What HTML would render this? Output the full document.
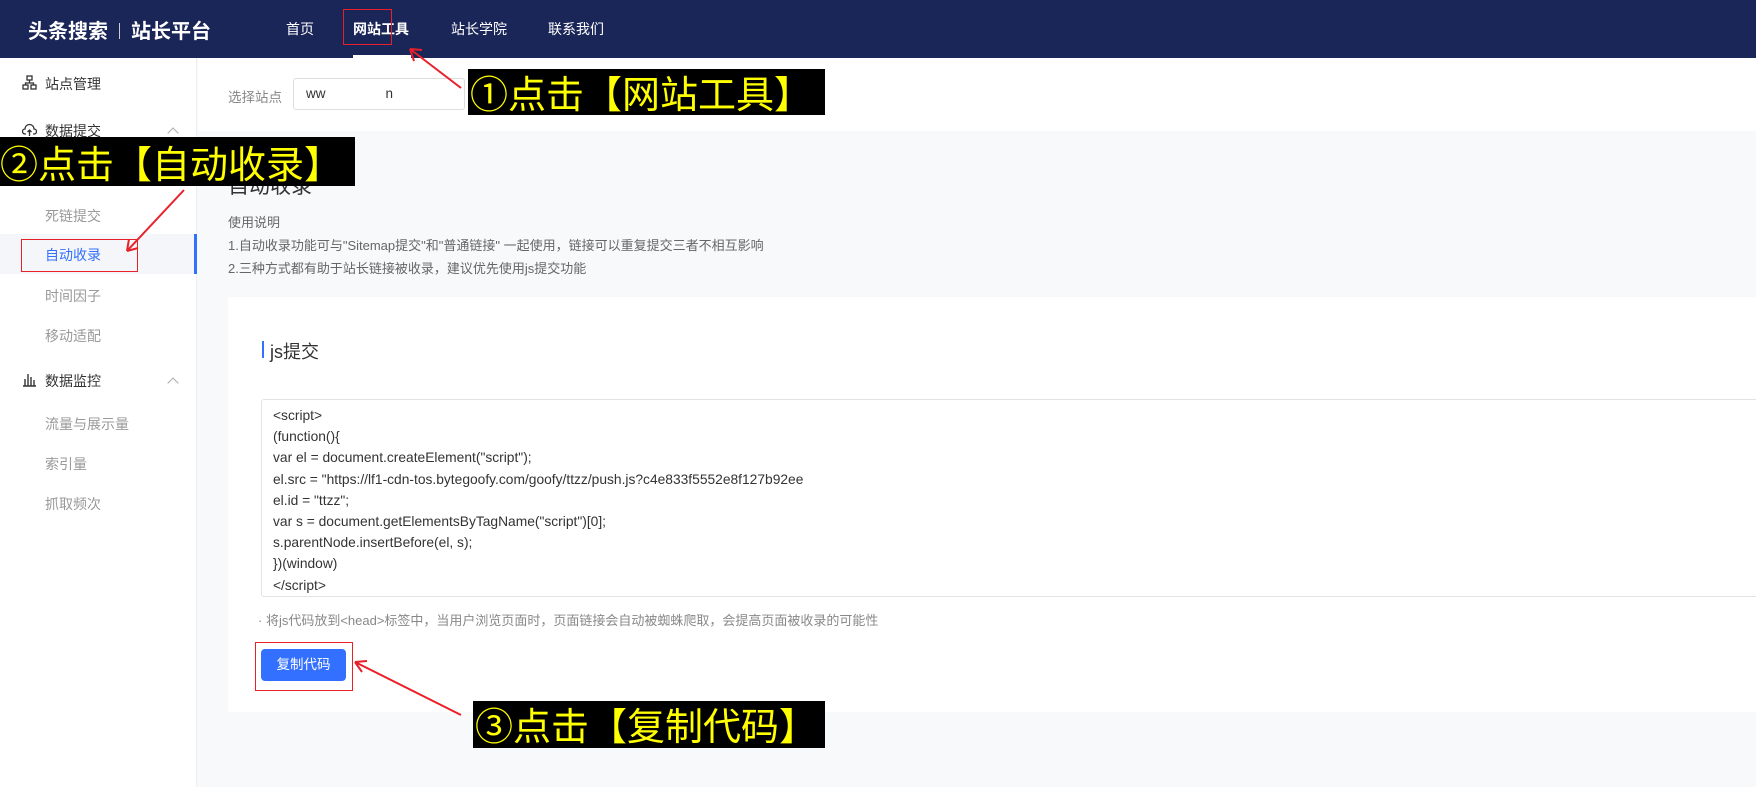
<!DOCTYPE html>
<html><head><meta charset="utf-8">
<style>
*{margin:0;padding:0;box-sizing:border-box}
body{width:1756px;height:787px;overflow:hidden;position:relative;background:#f8f9fb;font-family:"Liberation Sans","Noto Sans CJK SC",sans-serif;}
.abs{position:absolute}
#hd{left:0;top:0;width:1756px;height:58px;background:#1b2658}
.logo{left:28px;top:15px;color:#fff;font-size:20px;font-weight:bold;white-space:nowrap}
.nav{top:19px;color:#fff;font-size:14px;white-space:nowrap}
#side{left:0;top:58px;width:197px;height:729px;background:#fff;border-right:1px solid #eee}
.mi{left:45px;font-size:14px;color:#333;white-space:nowrap}
.si{left:45px;font-size:14px;color:#999;white-space:nowrap}
.ic{left:22px;width:15px;height:15px}
.chev{left:169px;width:8px;height:8px;border-left:1px solid #aaa;border-top:1px solid #aaa;transform:rotate(45deg)}
.code div{height:21.2px;line-height:21.2px}
.ann{background:#000;color:#ffff00;font-size:38px;line-height:46px;white-space:nowrap;font-family:"Noto Sans CJK SC",sans-serif;font-weight:normal;overflow:hidden}
</style></head><body>
<div id="hd" class="abs"></div>
<div class="abs logo">头条搜索<span style="display:inline-block;width:1px;height:16px;background:#ccc;margin:0 11px;vertical-align:-1px"></span>站长平台</div>
<div class="abs nav" style="left:286px">首页</div>
<div class="abs nav" style="left:353px;font-weight:bold">网站工具</div>
<div class="abs" style="left:353px;top:55px;width:58px;height:3px;background:#fff"></div>
<div class="abs nav" style="left:451px">站长学院</div>
<div class="abs nav" style="left:548px">联系我们</div>
<div class="abs" style="left:343px;top:9px;width:49px;height:36px;border:1.5px solid #e8202a"></div>

<div id="side" class="abs"></div>
<svg class="abs ic" style="top:75px" viewBox="0 0 15 15" fill="none" stroke="#333" stroke-width="1.3"><rect x="5" y="1" width="5" height="4"/><rect x="1" y="10" width="5" height="4"/><rect x="9" y="10" width="5" height="4"/><path d="M7.5 5v3M3.5 10V8h8v2"/></svg>
<div class="abs mi" style="top:74px">站点管理</div>
<svg class="abs ic" style="top:122px" viewBox="0 0 15 15" fill="none" stroke="#333" stroke-width="1.3"><path d="M4 12H3a2.5 2.5 0 0 1 0-5 4.5 4.5 0 0 1 9 0 2.5 2.5 0 0 1 0 5h-1M7.5 14V8M5.5 10l2-2 2 2"/></svg>
<div class="abs mi" style="top:121px">数据提交</div>
<div class="abs chev" style="top:129px"></div>
<div class="abs si" style="top:206px">死链提交</div>
<div class="abs" style="left:0;top:234px;width:197px;height:40px;background:#f4f6fa;border-right:3px solid #3370ff"></div>
<div class="abs mi" style="top:245px;color:#3370ff">自动收录</div>
<div class="abs" style="left:21px;top:239px;width:117px;height:33px;border:1.5px solid #e8202a"></div>
<div class="abs si" style="top:286px">时间因子</div>
<div class="abs si" style="top:326px">移动适配</div>
<svg class="abs ic" style="top:372px" viewBox="0 0 15 15" fill="none" stroke="#333" stroke-width="1.4"><path d="M1 14h13M3 14V7M6 14V2M9 14V5M12 14V8"/></svg>
<div class="abs mi" style="top:371px">数据监控</div>
<div class="abs chev" style="top:379px"></div>
<div class="abs si" style="top:414px">流量与展示量</div>
<div class="abs si" style="top:454px">索引量</div>
<div class="abs si" style="top:494px">抓取频次</div>

<div class="abs" style="left:198px;top:58px;width:1558px;height:73px;background:#fff"></div>
<div class="abs" style="left:228px;top:86px;font-size:13.5px;color:#888">选择站点</div>
<div class="abs" style="left:293px;top:78px;width:172px;height:32px;border:1px solid #ddd;border-radius:3px;background:#fff;font-size:13.5px;color:#333;padding:7px 12px;white-space:pre">ww                n</div>

<div class="abs" style="left:228px;top:170px;font-size:21px;color:#333">自动收录</div>
<div class="abs" style="left:228px;top:212px;font-size:13px;color:#666">使用说明</div>
<div class="abs" style="left:228px;top:235px;font-size:13px;color:#666;white-space:nowrap">1.自动收录功能可与"Sitemap提交"和"普通链接" 一起使用，链接可以重复提交三者不相互影响</div>
<div class="abs" style="left:228px;top:258px;font-size:13px;color:#666;white-space:nowrap">2.三种方式都有助于站长链接被收录，建议优先使用js提交功能</div>

<div class="abs" style="left:228px;top:297px;width:1528px;height:415px;background:#fff"></div>
<div class="abs" style="left:262px;top:341px;width:2px;height:17px;background:#3370ff"></div>
<div class="abs" style="left:270px;top:338px;font-size:18px;color:#333">js提交</div>
<div class="abs code" style="left:261px;top:399px;width:1500px;height:198px;border:1px solid #e3e3e3;border-radius:3px;padding:5px 11px;font-size:13.8px;color:#333;white-space:nowrap;overflow:hidden">
<div>&lt;script&gt;</div><div>(function(){</div><div>var el = document.createElement("script");</div><div style="width:553px;overflow:hidden">el.src = "https://lf1-cdn-tos.bytegoofy.com/goofy/ttzz/push.js?c4e833f5552e8f127b92ee</div><div>el.id = "ttzz";</div><div>var s = document.getElementsByTagName("script")[0];</div><div>s.parentNode.insertBefore(el, s);</div><div>})(window)</div><div>&lt;/script&gt;</div></div>
<div class="abs" style="left:258px;top:610px;font-size:13px;color:#888;white-space:nowrap">· 将js代码放到&lt;head&gt;标签中，当用户浏览页面时，页面链接会自动被蜘蛛爬取，会提高页面被收录的可能性</div>
<div class="abs" style="left:261px;top:649px;width:85px;height:32px;background:#3370ff;border-radius:4px;color:#fff;font-size:13.5px;text-align:center;line-height:32px">复制代码</div>
<div class="abs" style="left:255px;top:642px;width:98px;height:49px;border:1.5px solid #e8202a"></div>

<svg class="abs" style="left:0;top:0" width="1756" height="787"><g stroke="#e8202a" stroke-width="2" fill="none"><path d="M461 88L410 49M410 49l4 12M410 49l12 1"/><path d="M184 190L127 251M127 251l2-12M127 251l11-3"/><path d="M461 715L355 662M355 662l7 10M355 662l12-1"/></g></svg>

<div class="abs ann" style="left:468px;top:69px;width:357px;height:46px;padding-left:2px">①点击【网站工具】</div>
<div class="abs ann" style="left:0;top:137px;width:355px;height:49px;line-height:49px">②点击【自动收录】</div>
<div class="abs ann" style="left:473px;top:701px;width:352px;height:47px;padding-left:2px">③点击【复制代码】</div>
</body></html>
